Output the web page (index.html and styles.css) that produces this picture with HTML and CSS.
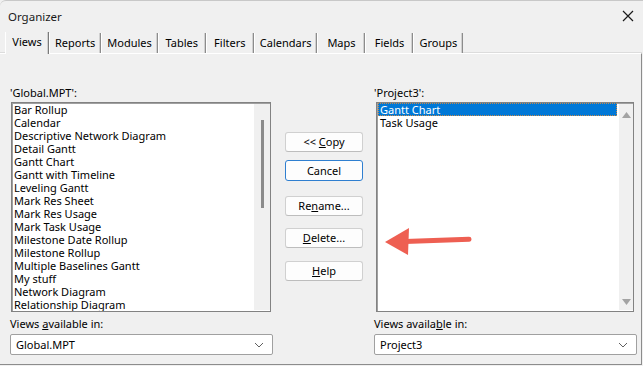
FILE: index.html
```html
<!DOCTYPE html>
<html>
<head>
<meta charset="utf-8">
<link rel="stylesheet" href="styles.css">
</head>
<body>
<div class="window">
  <div class="titlebar">
    <span class="title">Organizer</span>
    <svg class="close" width="14" height="14" viewBox="0 0 14 14"><path d="M2 2 L12 12 M12 2 L2 12" stroke="#1a1a1a" stroke-width="1.2" fill="none"/></svg>
  </div>
  <div class="tabs">
    <div class="tab active">Views</div>
    <div class="tab">Reports</div>
    <div class="tab">Modules</div>
    <div class="tab">Tables</div>
    <div class="tab">Filters</div>
    <div class="tab">Calendars</div>
    <div class="tab">Maps</div>
    <div class="tab">Fields</div>
    <div class="tab">Groups</div>
  </div>
  <div class="page">
    <div class="pane left">
      <div class="label">'Global.MPT':</div>
      <div class="listbox">
        <ul class="items">
          <li>Bar Rollup</li>
          <li>Calendar</li>
          <li>Descriptive Network Diagram</li>
          <li>Detail Gantt</li>
          <li>Gantt Chart</li>
          <li>Gantt with Timeline</li>
          <li>Leveling Gantt</li>
          <li>Mark Res Sheet</li>
          <li>Mark Res Usage</li>
          <li>Mark Task Usage</li>
          <li>Milestone Date Rollup</li>
          <li>Milestone Rollup</li>
          <li>Multiple Baselines Gantt</li>
          <li>My stuff</li>
          <li>Network Diagram</li>
          <li>Relationship Diagram</li>
        </ul>
        <div class="scroll thin"><div class="thumb"></div></div>
      </div>
      <div class="label lower">Views <u>a</u>vailable in:</div>
      <div class="select">Global.MPT<svg class="chev" width="10" height="6" viewBox="0 0 10 6"><path d="M1 1 L5 5 L9 1" stroke="#606060" stroke-width="1" fill="none"/></svg></div>
    </div>
    <div class="buttons">
      <div class="btn b-copy">&lt;&lt; <u>C</u>opy</div>
      <div class="btn b-cancel">Cancel</div>
      <div class="btn b-rename">Re<u>n</u>ame...</div>
      <div class="btn b-delete"><u>D</u>elete...</div>
      <div class="btn b-help"><u>H</u>elp</div>
    </div>
    <div class="pane right">
      <div class="label">'Project3':</div>
      <div class="listbox r">
        <ul class="items">
          <li class="sel">Gantt Chart</li>
          <li>Task Usage</li>
        </ul>
        <div class="scroll arrows">
          <svg width="9" height="6" viewBox="0 0 9 6"><path d="M0 6 L4.5 0 L9 6 Z" fill="#a3a3a3"/></svg>
          <svg width="9" height="6" viewBox="0 0 9 6"><path d="M0 0 L4.5 6 L9 0 Z" fill="#a3a3a3"/></svg>
        </div>
      </div>
      <div class="label lower">Views availa<u>b</u>le in:</div>
      <div class="select">Project3<svg class="chev" width="10" height="6" viewBox="0 0 10 6"><path d="M1 1 L5 5 L9 1" stroke="#606060" stroke-width="1" fill="none"/></svg></div>
    </div>
  </div>
  <svg class="arrow" width="100" height="34" viewBox="0 0 100 34">
    <path d="M20 17.5 L84 15.2" stroke="#ee5f52" stroke-width="5" stroke-linecap="round" fill="none"/>
    <path d="M0 18 L24 4 L23 31 Z" fill="#ee5f52"/>
  </svg>
</div>
</body>
</html>
```
FILE: styles.css
```css
* { box-sizing: border-box; }
html, body { margin: 0; padding: 0; }
body {
  width: 643px; height: 366px; overflow: hidden;
  background: #f0f0f0;
  font-family: "Noto Sans", "Open Sans", sans-serif;
  font-size: 11px;
  color: #000;
}
.window {
  position: relative;
  width: 643px; height: 366px;
  background: #f0f0f0;
  border-top: 1px solid #c8c8c8;
  border-top-left-radius: 6px;
}
.titlebar {
  height: 30px;
  display: flex; align-items: center; justify-content: space-between;
  padding: 0 8px 0 8px;
}
.title { font-size: 11.5px; color: #1a1a1a; }
.tabs {
  display: flex;
  height: 22px;
  padding-left: 5px;
  align-items: flex-end;
}
.tab {
  height: 20px;
  min-width: 48px;
  line-height: 19px;
  padding: 0 5px;
  text-align: center;
  border-left: 1px solid #fff;
  border-right: 1px solid #8c8c8c;
  box-shadow: inset -1px 0 0 #d0d0d0;
  background: #f0f0f0;
}
.tab.active {
  min-width: 44px;
  height: 22px;
  line-height: 20px;
  border-left: 1px solid #fff;
  border-right: 1px solid #7a7a7a;
  position: relative;
  top: 1px;
  z-index: 1;
}
.page {
  height: 312px;
  border-top: 1px solid #ffffff;
  border-right: 1px solid #8c8c8c;
  border-bottom: 1px solid #8c8c8c;
  width: 642px;
  box-shadow: 0 -1px 0 #dcdcdc;
  display: flex;
  padding: 31px 0 0 10px;
}
.pane { display: flex; flex-direction: column; width: 263px; }
.label { height: 15px; line-height: 15px; margin-bottom: 2px; }
.listbox {
  height: 210px;
  margin-left: 1px;
  width: 260px;
  border: 1px solid #828282;
  box-shadow: inset 1px 1px 0 #a0a0a0;
  background: #fff;
  display: flex;
}
.items {
  list-style: none; margin: 0; padding: 0 0 0 2px;
  flex: 1;
  overflow: hidden;
}
.items li { height: 13px; line-height: 13px; white-space: nowrap; }
.scroll {
  width: 16px;
  background: #f0f0f0;
  margin: 1px 0 1px 0;
}
.scroll.thin { display: flex; justify-content: center; padding-top: 16px; }
.thumb { width: 3px; height: 88px; background: #8b8b8b; margin-left: 1px; }
.label.lower { margin-top: 4px; margin-bottom: 3px; }
.select {
  height: 21px;
  width: 263px;
  background: #fff;
  border: 1px solid #a0a0a0;
  border-radius: 2px;
  display: flex; align-items: center; justify-content: space-between;
  padding: 0 8px 0 5px;
}
.buttons {
  width: 78px;
  margin-left: 12px;
  margin-right: 11px;
  padding-top: 47px;
  display: flex; flex-direction: column;
}
.btn {
  height: 20px;
  background: #fdfdfd;
  border: 1px solid #d0d0d0;
  border-bottom-color: #bdbdbd;
  border-radius: 3px;
  text-align: center;
  line-height: 18px;
}
.b-cancel { margin-top: 8px; border: 1px solid #2f7fd0; height: 21px; line-height: 19px; }
.b-rename { margin-top: 15px; }
.b-delete { margin-top: 12px; }
.b-help { margin-top: 13px; }
.listbox.r { margin-left: 2px; width: 258px; }
.listbox.r .items { padding-left: 1px; }
.sel { background: #0078d7; color: #fff; outline: 1px dotted #c88a4a; outline-offset: -1px; padding-left: 2px; margin-right: 2px; }
.listbox.r .items li:not(.sel) { padding-left: 2px; }
.scroll.arrows {
  width: 14px;
  display: flex; flex-direction: column; justify-content: space-between; align-items: center;
  padding: 8px 0 5px 0;
}
.arrow { position: absolute; left: 385px; top: 223px; }
```
